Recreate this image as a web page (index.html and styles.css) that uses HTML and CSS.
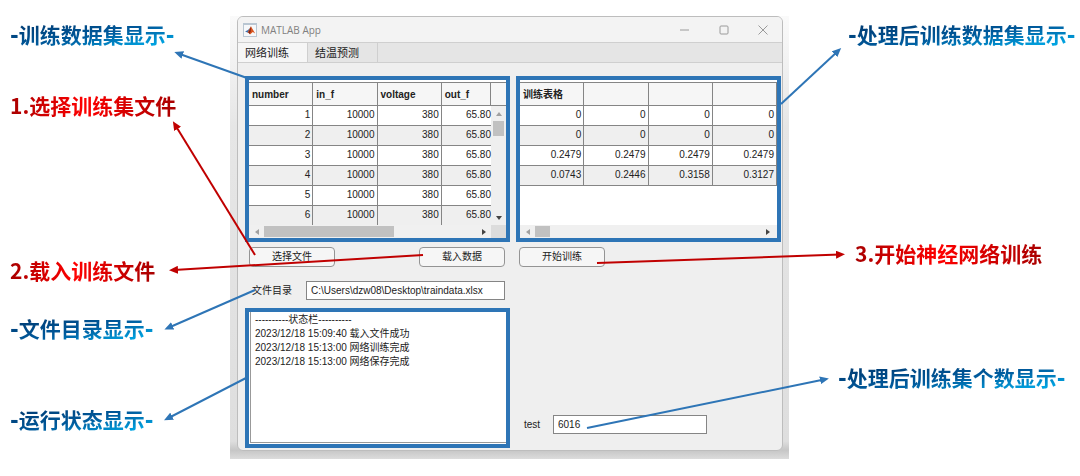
FILE: index.html
```html
<!DOCTYPE html>
<html lang="zh-CN">
<head>
<meta charset="utf-8">
<meta name="viewport" content="width=device-width, initial-scale=1">
<title>MATLAB App</title>
<link rel="stylesheet" href="styles.css">
</head>
<body>
<main class="figure">
  <aside class="notes notes-left">
    <p class="note blue n-data">-训练数据集显示-</p>
    <p class="note red n-pick">1.选择训练集文件</p>
    <p class="note red n-load">2.载入训练文件</p>
    <p class="note blue n-path">-文件目录显示-</p>
    <p class="note blue n-status">-运行状态显示-</p>
  </aside>

  <div class="shadow">
    <section class="window">
      <header class="titlebar">
        <svg class="logo" viewBox="0 0 14 14" aria-hidden="true">
          <rect x="0" y="0" width="14" height="14" fill="#b9c6d2"/>
          <rect x="1" y="2" width="12" height="11" fill="#f6f8fa"/>
          <path d="M2 8.500 5 7 7 5 6 10 4.500 9.600Z" fill="#3f6fa8"/>
          <path d="M4.600 9.600 6.500 6 8 3.200 9.200 5.500 12.200 10.500 9.800 9 7 11.600 6 10Z" fill="#d9541e"/>
          <path d="M5.500 9.800 8 3.200 7.600 8.500 6.600 11Z" fill="#7d2317"/>
        </svg>
        <h1 class="title">MATLAB App</h1>
        <div class="controls">
          <button class="control" type="button" aria-label="最小化"><svg viewBox="0 0 10 10"><path d="M0 5H9"/></svg></button>
          <button class="control" type="button" aria-label="最大化"><svg viewBox="0 0 10 10"><rect x="1" y="1" width="8" height="8" rx="1"/></svg></button>
          <button class="control" type="button" aria-label="关闭"><svg viewBox="0 0 10 10"><path d="M.5 .5 9.500 9.500M9.500 .5 .5 9.500"/></svg></button>
        </div>
      </header>
      <nav class="tabs" role="tablist">
        <button class="tab active" type="button" role="tab" aria-selected="true">网络训练</button>
        <button class="tab" type="button" role="tab" aria-selected="false">结温预测</button>
      </nav>

      <div class="content">
        <div class="frame">
          <table class="data source">
            <colgroup><col class="wide"><col class="wide"><col class="wide"><col><col class="bar-col"></colgroup>
            <thead><tr><th>number</th><th>in_f</th><th>voltage</th><th>out_f</th><th></th></tr></thead>
            <tbody>
              <tr><td>1</td><td>10000</td><td>380</td><td>65.80</td>
                <td class="bar-cell" rowspan="6"><div class="vbar">
                  <svg class="arrow faint" viewBox="0 0 6 4"><path d="M0 4 3 0 6 4Z"/></svg>
                  <span class="vthumb"></span>
                  <svg class="arrow last" viewBox="0 0 6 4"><path d="M0 0H6L3 4Z"/></svg>
                </div></td></tr>
              <tr><td>2</td><td>10000</td><td>380</td><td>65.80</td></tr>
              <tr><td>3</td><td>10000</td><td>380</td><td>65.80</td></tr>
              <tr><td>4</td><td>10000</td><td>380</td><td>65.80</td></tr>
              <tr><td>5</td><td>10000</td><td>380</td><td>65.80</td></tr>
              <tr><td>6</td><td>10000</td><td>380</td><td>65.80</td></tr>
            </tbody>
          </table>
          <div class="hbar with-corner">
            <svg class="arrow side faint" viewBox="0 0 4 6"><path d="M4 0V6L0 3Z"/></svg>
            <span class="track"><span class="hthumb long"></span></span>
            <svg class="arrow side" viewBox="0 0 4 6"><path d="M0 0V6L4 3Z"/></svg>
            <span class="corner"></span>
          </div>
        </div>

        <div class="frame">
          <table class="data">
            <thead><tr><th>训练表格</th><th></th><th></th><th></th></tr></thead>
            <tbody>
              <tr><td>0</td><td>0</td><td>0</td><td>0</td></tr>
              <tr><td>0</td><td>0</td><td>0</td><td>0</td></tr>
              <tr><td>0.2479</td><td>0.2479</td><td>0.2479</td><td>0.2479</td></tr>
              <tr><td>0.0743</td><td>0.2446</td><td>0.3158</td><td>0.3127</td></tr>
            </tbody>
          </table>
          <div class="hbar">
            <svg class="arrow side faint" viewBox="0 0 4 6"><path d="M4 0V6L0 3Z"/></svg>
            <span class="track"><span class="hthumb short"></span></span>
            <svg class="arrow side" viewBox="0 0 4 6"><path d="M0 0V6L4 3Z"/></svg>
          </div>
        </div>

        <div class="actions">
          <button class="push" type="button">选择文件</button>
          <button class="push" type="button">载入数据</button>
        </div>
        <div class="actions train">
          <button class="push" type="button">开始训练</button>
        </div>

        <div class="lower">
          <div class="field">
            <label for="path">文件目录</label>
            <input id="path" type="text" value="C:\Users\dzw08\Desktop\traindata.xlsx">
          </div>
          <div class="frame status-frame">
            <textarea class="status" aria-label="状态栏" readonly>----------状态栏----------
2023/12/18 15:09:40 载入文件成功
2023/12/18 15:13:00 网络训练完成
2023/12/18 15:13:00 网络保存完成</textarea>
          </div>
        </div>
        <div class="field test">
          <label for="test">test</label>
          <input id="test" type="text" value="6016">
        </div>
      </div>
    </section>
  </div>

  <aside class="notes notes-right">
    <p class="note blue n-processed">-处理后训练数据集显示-</p>
    <p class="note red n-train">3.开始神经网络训练</p>
    <p class="note blue n-count">-处理后训练集个数显示-</p>
  </aside>

  <svg class="pointers" viewBox="0 0 1080 476" preserveAspectRatio="none" aria-hidden="true">
    <defs>
      <marker id="tip-blue" viewBox="0 0 9 8" refX="4" refY="4" markerWidth="9" markerHeight="8" markerUnits="userSpaceOnUse" orient="auto"><path d="M0 0 9 4 0 8Z" fill="#2e75b6"/></marker>
      <marker id="tip-red" viewBox="0 0 9 8" refX="4" refY="4" markerWidth="9" markerHeight="8" markerUnits="userSpaceOnUse" orient="auto"><path d="M0 0 9 4 0 8Z" fill="#c00000"/></marker>
    </defs>
    <g class="line-blue">
      <path d="M247 78 179 53.700"/>
      <path d="M255 290 169 327.500"/>
      <path d="M246 378 168.500 418"/>
      <path d="M781 104 837.500 51.500"/>
      <path d="M587 428 824 379.500"/>
    </g>
    <g class="line-red">
      <path d="M255 255 175.500 125.500"/>
      <path d="M423 255 174 270"/>
      <path d="M597 263 840 254.500"/>
    </g>
  </svg>
</main>
</body>
</html>
```

FILE: styles.css
```css
* { box-sizing: border-box; }

body {
  margin: 0;
  background: #fff;
  color: #222;
  font-family: "Liberation Sans", "Noto Sans CJK SC", sans-serif;
  font-size: 10px;
}

button, input, textarea { font: inherit; color: inherit; }

.figure {
  position: relative;
  display: grid;
  grid-template-columns: minmax(0, 230fr) minmax(0, 559fr) minmax(0, 291fr);
  padding: 16px 0 17px;
}

/* Notes */
.notes { white-space: nowrap; }
.notes-left { padding-left: 10px; }
.note {
  width: max-content;
  margin: 0;
  font: bold 21px/28px "Noto Sans CJK SC", sans-serif;
  -webkit-background-clip: text;
  background-clip: text;
  color: transparent;
}
.blue {
  font-family: "DejaVu Sans", "Noto Sans CJK SC", sans-serif;
  background-image: linear-gradient(to bottom right, #003f78 15%, #005a9c 50%, #00a5e3 85%);
}
.red { background-image: linear-gradient(90deg, #a80000, #f00 45%, #e60000 60%, #a80000); }
.n-data, .n-processed { margin-top: 6px; }
.n-pick { margin-top: 41px; }
.n-load { margin-top: 137px; }
.n-path { margin-top: 32px; }
.n-status { margin-top: 63px; }
.n-processed { margin-left: 59px; }
.n-train { margin: 189px 0 0 66px; }
.n-count { margin: 98px 0 0 49px; }

/* Window */
.shadow {
  padding: 0 6px 8px 7px;
  background: linear-gradient(#fafafa, #e6e6e6 25%, #dedede 96%, #c6c6c6 98%, #dcdcdc);
}
.window {
  border: 1px solid #bdbdbd;
  border-radius: 6px;
  background: #efefef;
  overflow: hidden;
}
.titlebar {
  display: flex;
  align-items: center;
  height: 25px;
  padding: 0 14px 0 5px;
  background: #f3f3f3;
}
.logo { width: 14px; height: 14px; }
.title {
  margin: 0 0 0 4px;
  color: #808080;
  font: 10px/16px "Open Sans", sans-serif;
}
.controls { display: flex; gap: 29px; margin-left: auto; }
.control {
  display: flex;
  padding: 0;
  border: 0;
  background: none;
}
.control svg {
  width: 10px;
  height: 10px;
  fill: none;
  stroke: #9a9a9a;
}
.tabs {
  display: flex;
  height: 21px;
  border: solid #cfcfcf;
  border-width: 1px 0;
  background: #e5e5e5;
}
.tab {
  width: 70px;
  padding: 0 0 0 7px;
  border: 0;
  border-right: 1px solid #cfcfcf;
  background: transparent;
  font-size: 11px;
  line-height: 18px;
  text-align: left;
}
.tab.active { background: #f6f6f6; }

.content {
  display: grid;
  grid-template-columns: minmax(0, 1fr) minmax(0, 1fr);
  column-gap: 6px;
  padding: 13px 1px 2px 7px;
}
.frame {
  display: flex;
  flex-direction: column;
  padding-top: 2px;
  border: 4px solid #2e75b6;
  background: #fff;
}

/* Tables */
.data {
  width: 100%;
  table-layout: fixed;
  border-collapse: separate;
  border-spacing: 0;
}
.wide { width: 25%; }
.bar-col { width: 15px; }
.data th, .data td {
  height: 20px;
  padding: 0 2px 0 3px;
  border: solid #858585;
  border-width: 0 1px 1px 0;
  line-height: 15px;
  text-align: right;
  white-space: nowrap;
}
.data th {
  height: 24px;
  border-top-width: 1px;
  background: #f6f6f6;
  text-align: left;
}
.data tr:nth-child(even) td { background: #efefef; }
.data tbody td { vertical-align: top; padding-top: 1px; }
.source th:last-child { border-right: 0; }
.source td:nth-child(4) { padding-right: 0; border-right: 0; }
.source tr:last-child td { height: 19px; border-bottom: 0; }
.data .bar-cell { padding: 0; border: 0; background: #efefef; }
.vbar {
  display: flex;
  flex-direction: column;
  align-items: center;
  height: 119px;
  padding: 6px 1px 5px;
}
.vthumb { width: 11px; height: 15px; margin-top: 5px; background: #c1c1c1; }
.arrow { width: 6px; height: 4px; fill: #444; }
.arrow.side { width: 4px; height: 6px; }
.arrow.faint { fill: #a0a0a0; }
.arrow.last { margin-top: auto; }
.hbar {
  display: flex;
  align-items: center;
  height: 13px;
  margin-top: auto;
  padding: 0 7px 0 6px;
  background: #f0f0f0;
}
.with-corner { padding-right: 0; }
.track { flex: 1; margin: 0 5px; height: 11px; }
.hthumb { display: block; height: 100%; background: #c1c1c1; }
.hthumb.long { width: 61%; }
.hthumb.short { width: 15px; }
.corner { width: 15px; height: 13px; margin-left: 5px; background: #dcdcdc; }

/* Controls */
.actions {
  display: flex;
  justify-content: space-between;
  padding: 5px 5px 0 4px;
}
.train { padding-left: 3px; }
.push {
  width: 86px;
  height: 20px;
  padding: 0;
  border: 1px solid #949494;
  border-radius: 4px;
  background: #f6f6f6;
  line-height: 16px;
}
.lower { padding-top: 14px; }
.field { display: flex; align-items: center; padding: 0 5px 0 7px; }
.field input {
  flex: 1;
  min-width: 0;
  height: 19px;
  padding: 0 4px;
  border: 1px solid #858585;
  background: #fff;
}
.field label { width: 54px; line-height: 16px; }
.status-frame { margin-top: 8px; padding: 0 0 1px 1px; }
.status {
  display: block;
  height: 131px;
  padding: 1px 4px;
  border: solid #999;
  border-width: 0 0 1px 1px;
  background: #fff;
  line-height: 14px;
  resize: none;
  outline: 0;
  overflow: hidden;
}
.test {
  align-self: end;
  margin-bottom: 14px;
  padding: 0 74px 0 8px;
}
.test label { width: 29px; }

/* Pointer lines over the window */
.pointers {
  position: absolute;
  inset: 0;
  width: 100%;
  height: 100%;
  pointer-events: none;
}
.pointers g { fill: none; stroke-width: 2; }
.line-blue { stroke: #2e75b6; }
.line-red { stroke: #c00000; }
.line-blue path { marker-end: url(#tip-blue); }
.line-red path { marker-end: url(#tip-red); }
```
